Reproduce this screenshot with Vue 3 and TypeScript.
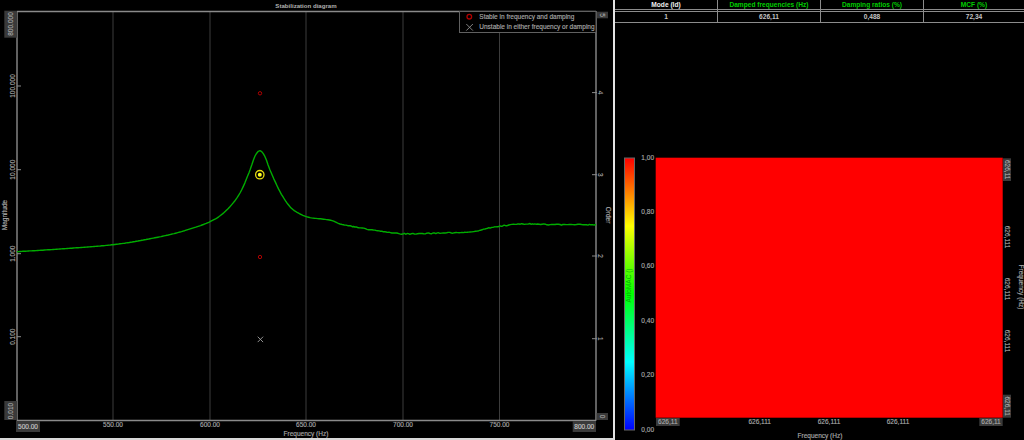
<script setup lang="ts">
type Pt = [number, number]

const knots: Pt[] = [
  [17, 251.7], [60, 249], [113, 244.7], [150, 238.7], [180, 232], [210, 221.7], [226.7, 210], [240, 193],
  [250, 170], [255, 156], [260, 150.7], [265, 156.7], [270, 170], [280, 191.7], [290, 206.7],
  [300, 214], [310, 217.6], [322, 219], [332, 220.6], [340, 224], [350, 226], [375, 230.3], [403, 233.7], [440, 233],
  [470, 232], [490, 227.7], [500, 226.3], [515, 224.3], [530, 224], [560, 224.7], [596, 224.7],
]

function sample(): string {
  const out: string[] = []
  for (let i = 0; i < knots.length - 1; i++) {
    const p0 = knots[Math.max(i - 1, 0)]
    const p1 = knots[i]
    const p2 = knots[i + 1]
    const p3 = knots[Math.min(i + 2, knots.length - 1)]
    const steps = Math.max(1, Math.round((p2[0] - p1[0]) / 1.5))
    for (let s = 0; s < steps; s++) {
      const t = s / steps
      const t2 = t * t
      const t3 = t2 * t
      const x = 0.5 * (2 * p1[0] + (p2[0] - p0[0]) * t + (2 * p0[0] - 5 * p1[0] + 4 * p2[0] - p3[0]) * t2 + (3 * p1[0] - p0[0] - 3 * p2[0] + p3[0]) * t3)
      const y = 0.5 * (2 * p1[1] + (p2[1] - p0[1]) * t + (2 * p0[1] - 5 * p1[1] + 4 * p2[1] - p3[1]) * t2 + (3 * p1[1] - p0[1] - 3 * p2[1] + p3[1]) * t3)
      const jitter = x > 345 ? Math.sin(x * 7.3) * 0.35 + Math.sin(x * 2.9) * 0.2 : 0
      out.push(`${x.toFixed(1)},${(y + jitter).toFixed(1)}`)
    }
  }
  out.push('596,224.7')
  return out.join(' ')
}

const curve = sample()
const gridX = [113, 210, 306, 403, 499.5]
const xLabels = [
  { x: 113, t: '550.00' }, { x: 210, t: '600.00' }, { x: 306, t: '650.00' },
  { x: 403, t: '700.00' }, { x: 499.5, t: '750.00' },
]
const magTicks = [
  { y: 86, t: '100.000' }, { y: 169.7, t: '10.000' }, { y: 253.7, t: '1.000' }, { y: 336.7, t: '0.100' },
]
const orderTicks = [
  { y: 92.6, t: '4' }, { y: 174.7, t: '3' }, { y: 256, t: '2' }, { y: 338.7, t: '1' },
]

const columns = [
  { head: 'Mode (Id)', value: '1', green: false },
  { head: 'Damped frequencies (Hz)', value: '626,11', green: true },
  { head: 'Damping ratios (%)', value: '0,488', green: true },
  { head: 'MCF (%)', value: '72,34', green: true },
]

const scale = [
  { y: 160.3, t: '1,00' }, { y: 214.3, t: '0,80' }, { y: 268.3, t: '0,60' },
  { y: 323.3, t: '0,40' }, { y: 377.3, t: '0,20' }, { y: 432.3, t: '0,00' },
]
const bottomTicks = [759.7, 829, 898]
const sideTicks = [237, 289, 341]
</script>

<template>
  <main class="screen">
    <section class="stab">
      <svg class="chart" width="613" height="438" viewBox="0 0 613 438">
        <text class="lbl strong" x="306" y="7.5" text-anchor="middle">Stabilization diagram</text>

        <line v-for="x in gridX" :key="x" class="grid" :x1="x" :x2="x" y1="12" y2="420" />

        <path class="axis" d="M17 11.5H596M17 11V420.5M596 11V420.5M17 420.5H596" />

        <rect class="tag" x="4.3" y="10.7" width="12.7" height="27" />
        <text class="lbl" transform="translate(13.3 24) rotate(-90)" text-anchor="middle">800.000</text>
        <rect class="tag" x="4.3" y="401" width="12.7" height="19" />
        <text class="lbl" transform="translate(13.3 411) rotate(-90)" text-anchor="middle">0.010</text>
        <template v-for="tick in magTicks" :key="tick.t">
          <line class="tick" x1="17" x2="21" :y1="tick.y" :y2="tick.y" />
          <text class="lbl" :transform="`translate(15 ${tick.y}) rotate(-90)`" text-anchor="middle">{{ tick.t }}</text>
        </template>
        <text class="lbl" transform="translate(7.3 215) rotate(-90)" text-anchor="middle">Magnitude</text>

        <rect class="tag" x="596.7" y="11.7" width="11.3" height="6.6" />
        <text class="lbl" transform="translate(599.8 15) rotate(90)" text-anchor="middle">5</text>
        <rect class="tag" x="596.7" y="413" width="11.3" height="7" />
        <text class="lbl" transform="translate(599.8 416.5) rotate(90)" text-anchor="middle">0</text>
        <template v-for="tick in orderTicks" :key="tick.t">
          <line class="tick" x1="592" x2="597" :y1="tick.y" :y2="tick.y" />
          <text class="lbl" :transform="`translate(598 ${tick.y}) rotate(90)`" text-anchor="middle">{{ tick.t }}</text>
        </template>
        <text class="lbl" transform="translate(605.7 215) rotate(90)" text-anchor="middle">Order</text>

        <polyline class="curve" :points="curve" />

        <circle class="stable" cx="260" cy="93.3" r="1.7" />
        <circle class="stable" cx="260" cy="257" r="1.7" />
        <path class="unstable" d="M257.7 336.7l5.4 5.4M263.1 336.7l-5.4 5.4" />
        <circle class="pick-ring" cx="259.8" cy="174.7" r="4.2" />
        <circle class="pick-dot" cx="259.8" cy="174.7" r="2" />

        <rect class="legend" x="459.5" y="11.5" width="136.5" height="21" />
        <circle class="legend-stable" cx="469.3" cy="16.7" r="2.3" />
        <path class="legend-x" d="M466.3 24l6.6 6.6M472.9 24l-6.6 6.6" />
        <text class="lbl" x="479.3" y="19.3">Stable in frequency and damping</text>
        <text class="lbl" x="479.3" y="29.3">Unstable in either frequency or damping</text>

        <rect class="tag" x="16" y="421" width="24" height="11" />
        <text class="lbl bright" x="28" y="428.5" text-anchor="middle">500.00</text>
        <rect class="tag" x="572.7" y="421" width="23.3" height="11" />
        <text class="lbl bright" x="584.3" y="428.5" text-anchor="middle">800.00</text>
        <text v-for="label in xLabels" :key="label.t" class="lbl" :x="label.x" y="426.6" text-anchor="middle">{{ label.t }}</text>
        <text class="lbl" x="306" y="435.5" text-anchor="middle">Frequency (Hz)</text>
      </svg>
    </section>

    <section class="results">
      <div class="table">
        <div v-for="col in columns" :key="col.head" class="col">
          <div class="head" :class="{ green: col.green }">{{ col.head }}</div>
          <div class="cell">{{ col.value }}</div>
        </div>
      </div>

      <svg class="matrix" width="409" height="417" viewBox="615 23 409 417">
        <defs>
          <linearGradient id="jet" x1="0" y1="0" x2="0" y2="1">
            <stop offset="0" stop-color="#ff0000" />
            <stop offset="0.25" stop-color="#ffff00" />
            <stop offset="0.5" stop-color="#00ff00" />
            <stop offset="0.75" stop-color="#00ffff" />
            <stop offset="1" stop-color="#0000ff" />
          </linearGradient>
        </defs>

        <rect class="bar" x="624.5" y="158" width="10" height="272" fill="url(#jet)" />
        <text class="bar-title" transform="translate(631.3 285.5) rotate(-90)" text-anchor="middle">AutoMAC ()</text>
        <text v-for="s in scale" :key="s.t" class="lbl" x="654" :y="s.y" text-anchor="end">{{ s.t }}</text>

        <rect class="heat" x="655.7" y="157.7" width="347" height="260" />

        <rect class="tag" x="656" y="418" width="23.7" height="8" />
        <text class="lbl" x="667.8" y="423.8" text-anchor="middle">626,11</text>
        <rect class="tag" x="979.3" y="418" width="23.4" height="8" />
        <text class="lbl" x="991" y="423.8" text-anchor="middle">626,11</text>
        <text v-for="x in bottomTicks" :key="x" class="lbl" :x="x" y="423.8" text-anchor="middle">626,111</text>
        <text class="lbl" x="820" y="438" text-anchor="middle">Frequency (Hz)</text>

        <rect class="tag" x="1003" y="158.3" width="8" height="22.7" />
        <text class="lbl" transform="translate(1004.7 169.7) rotate(90)" text-anchor="middle">626,11</text>
        <rect class="tag" x="1003" y="394.7" width="8" height="23" />
        <text class="lbl" transform="translate(1004.7 406.2) rotate(90)" text-anchor="middle">626,11</text>
        <text v-for="y in sideTicks" :key="y" class="lbl" :transform="`translate(1004.7 ${y}) rotate(90)`" text-anchor="middle">626,111</text>
        <text class="lbl" transform="translate(1018.7 287) rotate(90)" text-anchor="middle">Frequency (Hz)</text>
      </svg>
    </section>
  </main>
</template>

<style>
html, body {
  margin: 0;
  background: #000;
}
</style>

<style scoped>
.screen {
  display: flex;
  width: 1024px;
  height: 440px;
  overflow: hidden;
  background: #000;
  font-family: "Liberation Sans", Arial, sans-serif;
}

.stab {
  flex: none;
  width: 613px;
  height: 438px;
  border-right: 2px solid #e4e4e4;
  border-bottom: 2px solid #d8d8d8;
}

.chart,
.matrix {
  display: block;
}

.lbl {
  font-family: "Liberation Sans", Arial, sans-serif;
  font-size: 6.5px;
  fill: #a8a8a8;
  stroke: #a8a8a8;
  stroke-width: 0.15px;
}

.strong {
  font-size: 6.1px;
  font-weight: 700;
  fill: #b0b0b0;
  stroke: none;
}

.bright {
  fill: #c8c8c8;
  stroke: #c8c8c8;
}

.grid {
  stroke: #3c3c3c;
  stroke-width: 1;
}

.axis {
  fill: none;
  stroke: #8a8a8a;
  stroke-width: 1.4;
}

.tick {
  stroke: #8a8a8a;
  stroke-width: 1;
}

.tag {
  fill: #3a3a3a;
}

.curve {
  fill: none;
  stroke: #00ac00;
  stroke-width: 1.4;
  stroke-linejoin: round;
}

.stable {
  fill: none;
  stroke: #b00000;
  stroke-width: 1;
}

.unstable {
  fill: none;
  stroke: #a0a0a0;
  stroke-width: 0.9;
}

.pick-ring {
  fill: #000;
  stroke: #e6dc10;
  stroke-width: 1.3;
}

.pick-dot {
  fill: #ffff20;
}

.legend {
  fill: #000;
  stroke: #606060;
  stroke-width: 1;
}

.legend-stable {
  fill: none;
  stroke: #b00000;
  stroke-width: 1.3;
}

.legend-x {
  fill: none;
  stroke: #909090;
  stroke-width: 0.9;
}

.results {
  flex: 1;
  min-width: 0;
  display: flex;
  flex-direction: column;
}

.table {
  flex: none;
  display: grid;
  grid-template-columns: 103px 103px 103px 1fr;
  height: 23px;
}

.col {
  display: flex;
  flex-direction: column;
  font-size: 6.6px;
  font-weight: 700;
  text-align: center;
  border-right: 1px solid #8c8c8c;
  border-bottom: 1px solid #8c8c8c;
}

.col:last-child {
  border-right: 0;
}

.head {
  height: 9px;
  line-height: 9px;
  color: #f0f0f0;
  border-bottom: 3px double #8c8c8c;
}

.head.green {
  color: #00cc00;
}

.cell {
  flex: 1;
  line-height: 10px;
  color: #c4c4c4;
}

.bar {
  stroke: #666;
  stroke-width: 1;
}

.bar-title {
  font-family: "Liberation Sans", Arial, sans-serif;
  font-size: 6.5px;
  fill: #00b400;
}

.heat {
  fill: #ff0000;
}
</style>
